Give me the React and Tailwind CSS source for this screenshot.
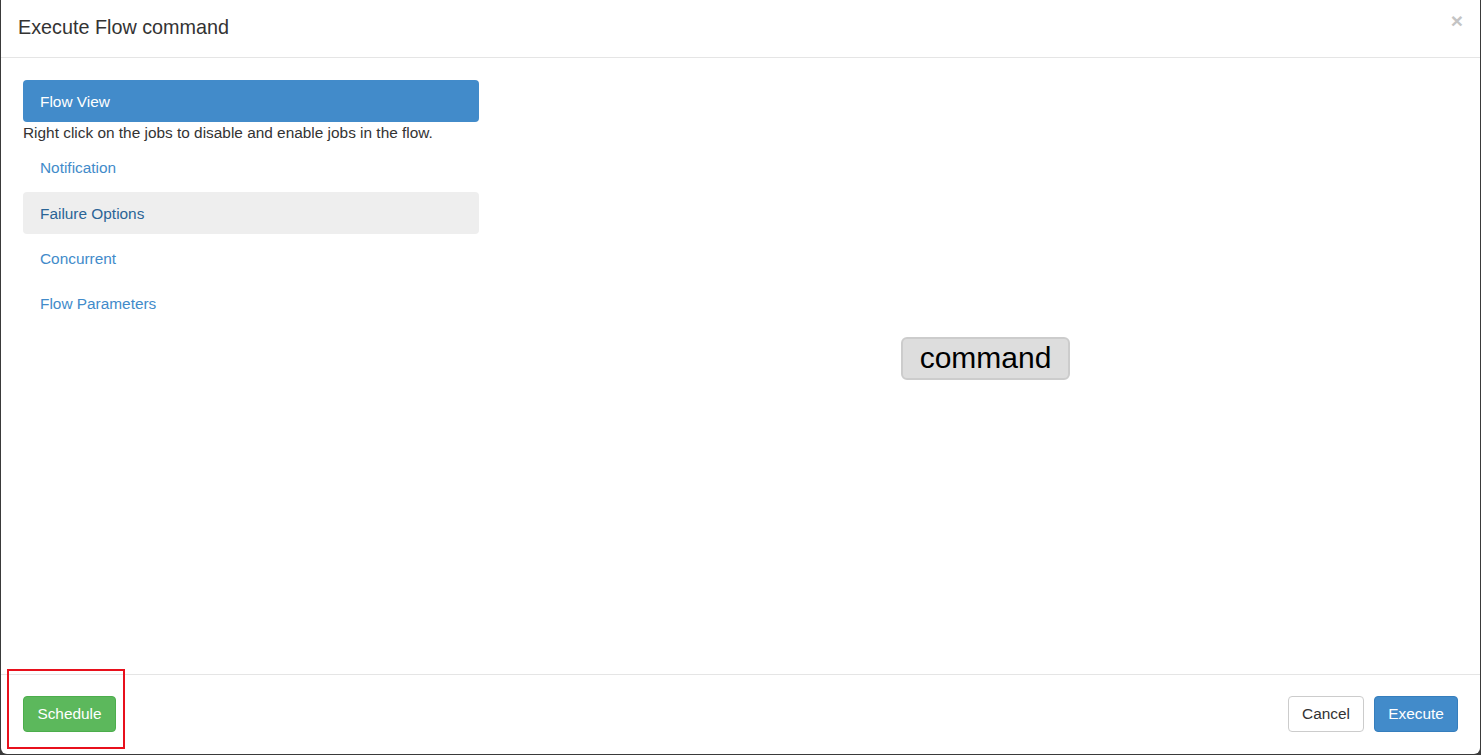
import React from "react";

const font = { fontFamily: '"Liberation Sans", Arial, sans-serif' };

function NavItem({ label, variant, className = "" }) {
  const base = `h-[42px] flex items-center pl-[17px] pt-[2px] rounded-[4px] text-[15.4px] ${className}`;
  if (variant === "active") return <div className={`${base} bg-[#428bca] text-white`}>{label}</div>;
  if (variant === "hover") return <div className={`${base} bg-[#eeeeee] text-[#2a6496]`}>{label}</div>;
  return <div className={`${base} text-[#428bca]`}>{label}</div>;
}

export default function App() {
  return (
    <div className="w-[1481px] h-[755px] bg-[#3a3a3a] overflow-hidden" style={font}>
      <div className="ml-[1px] w-[1479px] h-[754px] bg-white rounded-b-[6px] flex flex-col relative">
        {/* header */}
        <div className="h-[58px] border-b border-[#e5e5e5] flex items-center justify-between pl-[17px] pr-[17px] pb-[3px]">
          <div className="text-[19.8px] text-[#333333] leading-[26px]">Execute Flow command</div>
          <div className="text-[21px] font-bold text-[#c4c4c4] leading-none -mt-[14px]">×</div>
        </div>
        {/* body */}
        <div className="flex-1 flex pt-[22px] pl-[22px] pr-[22px]">
          <div className="w-[456px] flex flex-col">
            <NavItem label="Flow View" variant="active" />
            <div className="text-[15.4px] leading-[22px] text-[#333333]">
              Right click on the jobs to disable and enable jobs in the flow.
            </div>
            <NavItem label="Notification" className="mt-[2px]" />
            <NavItem label="Failure Options" variant="hover" className="mt-[4px]" />
            <NavItem label="Concurrent" className="mt-[3px]" />
            <NavItem label="Flow Parameters" className="mt-[3px]" />
          </div>
          <div className="flex-1 relative">
            <div className="absolute left-[422px] top-[257px] w-[169px] h-[43px] bg-[#dddddd] border-2 border-[#cccccc] rounded-[6px] flex items-center justify-center text-[30px] text-black leading-none pb-[1px]">
              command
            </div>
          </div>
        </div>
        {/* footer */}
        <div className="h-[80px] border-t border-[#e5e5e5] flex items-start justify-between pt-[21px] pl-[22px] pr-[22px]">
          <button className="h-[36px] w-[93px] rounded-[4px] bg-[#5cb85c] border border-[#4cae4c] text-white text-[15.4px]">
            Schedule
          </button>
          <div className="flex gap-[10px]">
            <button className="h-[36px] w-[76px] rounded-[4px] bg-white border border-[#cccccc] text-[#333333] text-[15.4px]">
              Cancel
            </button>
            <button className="h-[36px] w-[84px] rounded-[4px] bg-[#428bca] border border-[#357ebd] text-white text-[15.4px]">
              Execute
            </button>
          </div>
        </div>
        {/* red highlight */}
        <div className="absolute left-[6px] top-[669px] w-[118px] h-[80px] border-2 border-[#e8101c] pointer-events-none" />
      </div>
    </div>
  );
}
